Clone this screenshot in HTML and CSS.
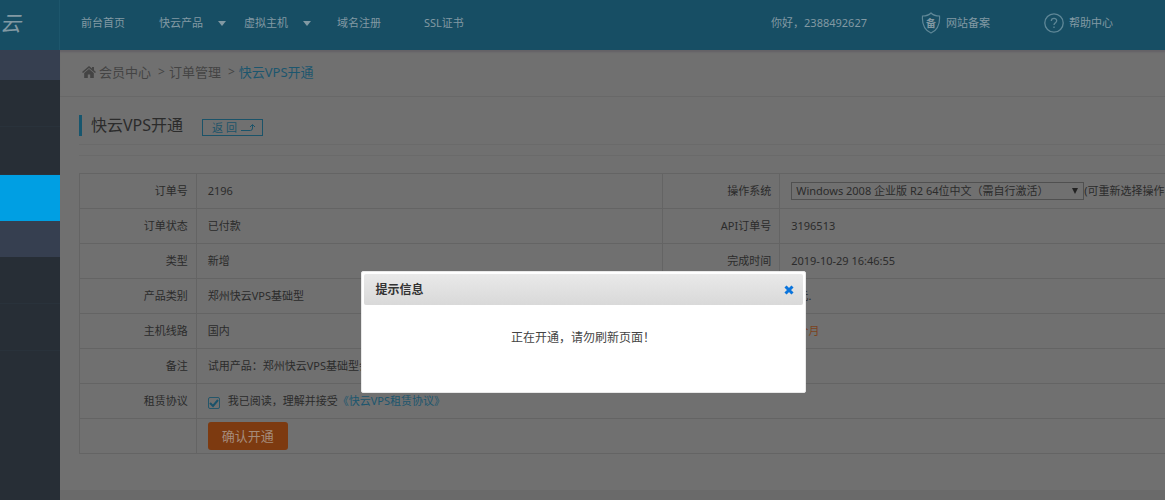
FILE: index.html
```html
<!DOCTYPE html>
<html lang="zh-CN">
<head>
<meta charset="utf-8">
<title>快云VPS开通</title>
<link rel="stylesheet" href="styles.css">
</head>
<body>
<div class="page">
  <header class="header">
    <a class="logo" href="#">云</a>
    <nav class="nav">
      <a class="nav-item" href="#">前台首页</a>
      <a class="nav-item nav-drop" href="#">快云产品<span class="caret"></span></a>
      <a class="nav-item nav-drop" href="#">虚拟主机<span class="caret"></span></a>
      <a class="nav-item nav-domain" href="#">域名注册</a>
      <a class="nav-item" href="#">SSL证书</a>
    </nav>
    <div class="tools">
      <span class="hello">你好，2388492627</span>
      <a class="tool" href="#"><span class="shield"><svg width="20" height="22" viewBox="0 0 20 22" fill="none" stroke="currentColor" stroke-width="1.2"><path d="M10 1C8 3 4.500 4 1.500 4C1 11 2 17.500 10 21C18 17.500 19 11 18.500 4C15.500 4 12 3 10 1Z"/></svg><span class="shield-text">备</span></span>网站备案</a>
      <a class="tool" href="#"><svg width="20" height="20" viewBox="0 0 20 20" fill="none" stroke="currentColor" stroke-width="1.300"><circle cx="10" cy="10" r="9.200"/><path d="M7.300 8C7.300 4.500 12.700 4.500 12.700 7.800C12.700 9.700 10 9.700 10 12M10 13.500V15"/></svg>帮助中心</a>
    </div>
  </header>
  <div class="body">
    <aside class="sidebar">
      <div class="side-head side-first"></div>
      <div class="side-item"></div>
      <div class="side-item side-last"></div>
      <div class="side-item side-active"></div>
      <div class="side-head"></div>
      <div class="side-item"></div>
      <div class="side-item"></div>
    </aside>
    <main class="main">
      <nav class="crumbs">
        <svg class="home" width="14" height="12" viewBox="0 0 14 12" fill="currentColor"><path d="M7 0L0 6L1 7L7 2L13 7L14 6L12 4.300V1H10V2.600Z"/><path d="M2.200 7L7 3L11.800 7V12H8.200V8.500H5.800V12H2.200Z"/></svg>
        <a href="#">会员中心</a><span class="sep">&gt;</span><a href="#">订单管理</a><span class="sep">&gt;</span><a class="current" href="#">快云VPS开通</a>
      </nav>
      <div class="title-row">
        <h1 class="title">快云VPS开通</h1>
        <button class="back" type="button">返 回<svg width="14" height="8" viewBox="0 0 14 8" fill="none" stroke="currentColor"><path d="M0 6.500H9.500Q11.500 6.500 11.500 4V1M9 3L11.500 .5L14 3"/></svg></button>
      </div>
      <section class="content">
        <table class="info">
          <colgroup><col class="c-label"><col class="c-value"><col class="c-label"><col class="c-value"></colgroup>
          <tr><th>订单号</th><td>2196</td><th><label for="os">操作系统</label></th><td><span class="os-line"><select id="os" class="os"><option>Windows 2008 企业版 R2 64位中文（需自行激活）</option></select><span>(可重新选择操作系统)</span></span></td></tr>
          <tr><th>订单状态</th><td>已付款</td><th>API订单号</th><td>3196513</td></tr>
          <tr><th>类型</th><td>新增</td><th>完成时间</th><td>2019-10-29 16:46:55</td></tr>
          <tr><th>产品类别</th><td>郑州快云VPS基础型</td><th></th><td>1元.</td></tr>
          <tr><th>主机线路</th><td>国内</td><th></th><td class="term">1个月</td></tr>
          <tr><th>备注</th><td colspan="3">试用产品：郑州快云VPS基础型会</td></tr>
          <tr><th>租赁协议</th><td colspan="3"><span class="agree"><input id="agree" class="check" type="checkbox" checked><label for="agree">我已阅读，理解并接受</label><a href="#">《快云VPS租赁协议》</a></span></td></tr>
          <tr><th></th><td colspan="3"><button class="confirm" type="button">确认开通</button></td></tr>
        </table>
      </section>
    </main>
  </div>
  <div class="dialog" role="dialog" aria-labelledby="dialog-title">
    <div class="dialog-head">
      <h2 class="dialog-title" id="dialog-title">提示信息</h2>
      <button class="close" type="button" aria-label="关闭"><svg width="10" height="10" viewBox="0 0 10 10" stroke="currentColor" stroke-width="3"><path d="M1.500 1.500L8.500 8.500M8.500 1.500L1.500 8.500"/></svg></button>
    </div>
    <p class="dialog-text">正在开通，请勿刷新页面！</p>
  </div>
</div>
</body>
</html>
```

FILE: styles.css
```css
* { box-sizing: border-box; }
body {
  margin: 0;
  background: #6a6a6a;
  color: #2b2b2b;
  font: 11px/16px "Noto Sans", "Noto Sans CJK SC", sans-serif;
}
a { color: inherit; text-decoration: none; }
button, select { font: inherit; color: inherit; }
.page {
  display: flex;
  flex-direction: column;
  height: 100vh;
  overflow: hidden;
}
.header {
  display: flex;
  flex: none;
  height: 50px;
  background: #174e64;
  color: #8299a3;
}
.logo {
  display: flex;
  align-items: center;
  width: 60px;
  padding-bottom: 4px;
  border-right: 1px solid #1d566c;
  font-size: 21px;
  font-style: italic;
}
.nav, .tools { display: flex; align-items: center; padding-bottom: 4px; }
.nav { flex: 1; padding-left: 21px; }
.nav-item { margin-right: 34px; white-space: nowrap; }
.nav-drop { display: flex; align-items: center; margin-right: 18px; }
.nav-domain { margin: 0 43px 0 8px; }
.caret {
  margin-left: 15px;
  border: 4px solid transparent;
  border-top: 5px solid #8299a3;
  border-bottom: 0;
}
.tools { padding-right: 52px; }
.tool { display: flex; align-items: center; gap: 5px; margin-left: 54px; }
.tool > svg, .shield { color: #5f8797; }
.shield { position: relative; display: flex; }
.shield-text {
  position: absolute;
  inset: 0;
  color: #8299a3;
  font-weight: bold;
  font-size: 10px;
  line-height: 22px;
  text-align: center;
}
.body { display: flex; flex: 1; min-height: 0; }
.sidebar {
  display: flex;
  flex-direction: column;
  flex: none;
  width: 60px;
  background: #272e36;
}
.side-head { height: 36px; background: #363f50; }
.side-first { height: 30px; }
.side-item { height: 47px; border-bottom: 1px solid #29323b; }
.side-last { height: 48px; }
.side-active { height: 46px; background: #009fe3; border: 0; }
.main { flex: 1; min-width: 0; overflow: hidden; }
.crumbs {
  display: flex;
  align-items: center;
  height: 47px;
  padding: 0 0 2px 22px;
  background: #707070;
  border-bottom: 1px solid #686868;
  box-shadow: inset 0 3px 2px -1px #646166;
  color: #444;
  font-size: 13px;
}
.home { margin-right: 3px; }
.sep { margin: 0 4px 0 7px; font-size: 12px; }
.current { color: #1c566e; }
.title-row {
  display: flex;
  align-items: center;
  height: 47px;
  padding: 10px 0 0 19px;
  background: #707070;
}
.title {
  margin: 0;
  padding-left: 9px;
  border-left: 3px solid #17566e;
  font-size: 16px;
  font-weight: normal;
  line-height: 21px;
}
.back {
  display: flex;
  align-items: center;
  gap: 4px;
  height: 17px;
  margin: 4px 0 0 19px;
  padding: 0 7px 0 9px;
  background: none;
  border: 1px solid #1b5369;
  color: #1b5369;
}
.content {
  padding: 0 0 36px 19px;
  background: #707070;
}
.content::before {
  content: "";
  display: block;
  height: 10px;
  margin-bottom: 17px;
  border: solid #6a6a6a;
  border-width: 1px 0;
}
.info {
  width: 100%;
  min-width: 1168px;
  table-layout: fixed;
  border-collapse: collapse;
}
.c-label { width: 10%; }
.c-value { width: 40%; }
.info tr { height: 35px; }
.info th, .info td {
  padding: 0 8px 0 11px;
  border: 1px solid #646464;
  font-weight: normal;
  text-align: left;
  white-space: nowrap;
}
.info th { text-align: right; }
.os-line { display: flex; align-items: center; }
.os {
  width: 293px;
  height: 18px;
  padding: 0 4px;
  border: 1px solid #505050;
  border-radius: 0;
  appearance: none;
  background: url("data:image/svg+xml,%3Csvg xmlns='http://www.w3.org/2000/svg' width='6' height='6'%3E%3Cpath d='M0 0H6L3 6Z' fill='%23222'/%3E%3C/svg%3E") no-repeat right 5px center;
  line-height: 16px;
}
.term { color: #7b431d; }
.agree { display: flex; align-items: center; }
.agree a { color: #1c566e; }
.check {
  width: 12px;
  height: 12px;
  margin: 4px 8px 0 0;
  appearance: none;
  border: 1px solid #24566a;
  border-radius: 2px;
  background: url("data:image/svg+xml,%3Csvg xmlns='http://www.w3.org/2000/svg' width='10' height='10'%3E%3Cpath d='M1 5L4 8L9 2' fill='none' stroke='%231a526a' stroke-width='2'/%3E%3C/svg%3E") no-repeat center;
}
.confirm {
  display: block;
  height: 28px;
  padding: 0 14px;
  background: #7d3a10;
  border: 0;
  border-radius: 3px;
  color: #a58c7c;
  font-size: 13px;
}
.dialog {
  position: fixed;
  top: 271px;
  left: 50%;
  width: 445px;
  margin-left: -222px;
  padding: 2px 2px 46px;
  background: #fff;
  border: 1px solid #e8e8e8;
  border-radius: 2px;
}
.dialog-head {
  display: flex;
  align-items: center;
  justify-content: space-between;
  height: 31px;
  padding: 0 9px 0 12px;
  background: linear-gradient(#e9e9e9, #d9d9d9);
  border-radius: 2px;
}
.dialog-title { margin: 0; color: #333; font-size: 12px; }
.close { display: flex; padding: 0; background: none; border: 0; color: #0a74dc; }
.dialog-text {
  margin: 25px 0 0;
  color: #444;
  font-size: 12px;
  text-align: center;
}
```
